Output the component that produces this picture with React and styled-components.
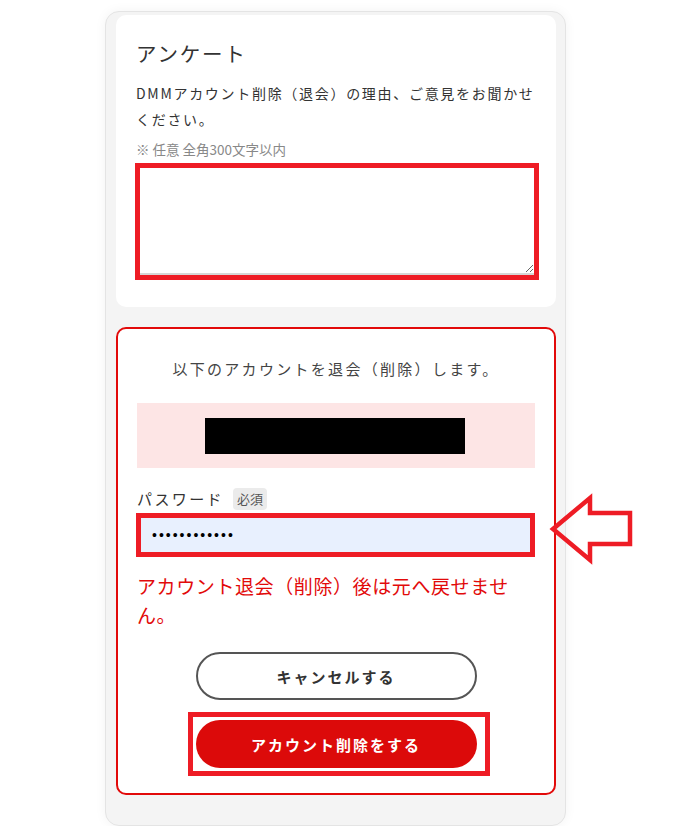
import React from 'react';
import styled, { createGlobalStyle } from 'styled-components';

const GlobalStyle = createGlobalStyle`
  body {
    margin: 0;
    background: #fff;
    font-family: "Noto Sans CJK JP", "Noto Sans", sans-serif;
    color: #333;
  }
`;

function App() {
  return (
    <>
      <GlobalStyle />
      <Frame>
        <Card>
          <Title>アンケート</Title>
          <Lead>DMMアカウント削除（退会）の理由、ご意見をお聞かせください。</Lead>
          <Note>※ 任意 全角300文字以内</Note>
          <Highlight>
            <Comment />
          </Highlight>
        </Card>

        <DangerCard>
          <Confirm>以下のアカウントを退会（削除）します。</Confirm>
          <AccountBox>
            <Masked />
          </AccountBox>

          <Label>
            パスワード
            <Badge>必須</Badge>
          </Label>
          <PasswordField>
            <Highlight>
              <Password type="password" defaultValue="************" readOnly />
            </Highlight>
            <Arrow width="88" height="73" viewBox="0 0 88 73">
              <polygon
                points="5,36 42,5 42,20 82,20 82,51 42,51 42,67"
                fill="none"
                stroke="#ee1c25"
                strokeWidth="4.5"
              />
            </Arrow>
          </PasswordField>

          <Warning>アカウント退会（削除）後は元へ戻せません。</Warning>

          <Actions>
            <PillButton>キャンセルする</PillButton>
            <ButtonMark>
              <PillButton $primary>アカウント削除をする</PillButton>
            </ButtonMark>
          </Actions>
        </DangerCard>
      </Frame>
    </>
  );
}

export default App;

const Frame = styled.div`
  box-sizing: border-box;
  width: 461px;
  margin: 11px 0 0 105px;
  padding: 3px 9px 30px 10px;
  background: #f4f4f4;
  border: 1px solid #e4e4e4;
  border-radius: 14px;
  box-shadow: 0 0 12px rgba(0, 0, 0, 0.05);
  display: flex;
  flex-direction: column;
  gap: 20px;
`;

const Card = styled.section`
  background: #fff;
  border-radius: 10px;
  padding: 23px 17px 27px 20px;
`;

const Title = styled.h2`
  margin: 0;
  font-size: 20.5px;
  font-weight: 400;
  line-height: 30px;
  letter-spacing: 1.8px;
  color: #333;
`;

const Lead = styled.p`
  margin: 12px 0 0;
  font-size: 14px;
  line-height: 26px;
  letter-spacing: 1.7px;
  color: #333;
`;

const Note = styled.p`
  margin: 8px 0 5px;
  font-size: 13.5px;
  line-height: 18px;
  color: #888;
`;

const Highlight = styled.div`
  border: 5px solid #ee1c25;
  margin-left: -1px;
`;

const Comment = styled.textarea`
  display: block;
  box-sizing: border-box;
  width: 100%;
  height: 107px;
  margin: 0;
  padding: 8px;
  border: none;
  border-bottom: 2px solid #d6d6d6;
  background: #fff;
  resize: vertical;
  outline: none;
  font: inherit;
`;

const DangerCard = styled.section`
  background: #fff;
  border: 2px solid #e20a0a;
  border-radius: 10px;
  padding: 28px 19px 17px;
  display: flex;
  flex-direction: column;
`;

const Confirm = styled.p`
  margin: 0;
  text-align: center;
  font-size: 15px;
  line-height: 24px;
  letter-spacing: 2.3px;
  color: #444;
`;

const AccountBox = styled.div`
  margin-top: 22px;
  height: 65px;
  background: #fde5e5;
  display: flex;
  align-items: center;
  justify-content: center;
`;

const Masked = styled.div`
  width: 260px;
  height: 36px;
  background: #000;
  margin-right: 3px;
`;

const Label = styled.div`
  margin-top: 20px;
  display: flex;
  align-items: center;
  gap: 9px;
  font-size: 15px;
  line-height: 22px;
  letter-spacing: 2.4px;
  color: #333;
`;

const Badge = styled.span`
  display: inline-flex;
  align-items: center;
  height: 22px;
  padding: 0 4px;
  border-radius: 4px;
  background: #ebebeb;
  font-size: 13px;
  letter-spacing: 0;
  color: #555;
`;

const PasswordField = styled.div`
  position: relative;
  margin-top: 3px;
`;

const Password = styled.input`
  display: block;
  box-sizing: border-box;
  width: 100%;
  height: 34px;
  margin: 0;
  padding: 0 11px;
  border: none;
  background: #e8f0fe;
  outline: none;
  font-family: "Liberation Sans", Arial, sans-serif;
  font-size: 14px;
  letter-spacing: 2px;
  color: #000;
`;

const Arrow = styled.svg`
  position: absolute;
  left: calc(100% + 13px);
  top: -20px;
  overflow: visible;
`;

const Warning = styled.p`
  margin: 14px 0 0;
  font-size: 19px;
  line-height: 29px;
  letter-spacing: 0.6px;
  color: #e20a0a;
`;

const Actions = styled.div`
  margin-top: 23px;
  display: flex;
  flex-direction: column;
  align-items: center;
  gap: 12px;
`;

const ButtonMark = styled.div`
  border: 5px solid #ee1c25;
  padding: 3px 8px 3px 3px;
  margin-left: 5px;
`;

const PillButton = styled.button`
  box-sizing: border-box;
  width: 281px;
  height: 48px;
  border-radius: 24px;
  border: ${(p) => (p.$primary ? 'none' : '2px solid #555')};
  background: ${(p) => (p.$primary ? '#dc0a0a' : '#fff')};
  color: ${(p) => (p.$primary ? '#fff' : '#333')};
  font-family: inherit;
  font-size: 15px;
  font-weight: 700;
  letter-spacing: 2px;
  cursor: pointer;
`;
